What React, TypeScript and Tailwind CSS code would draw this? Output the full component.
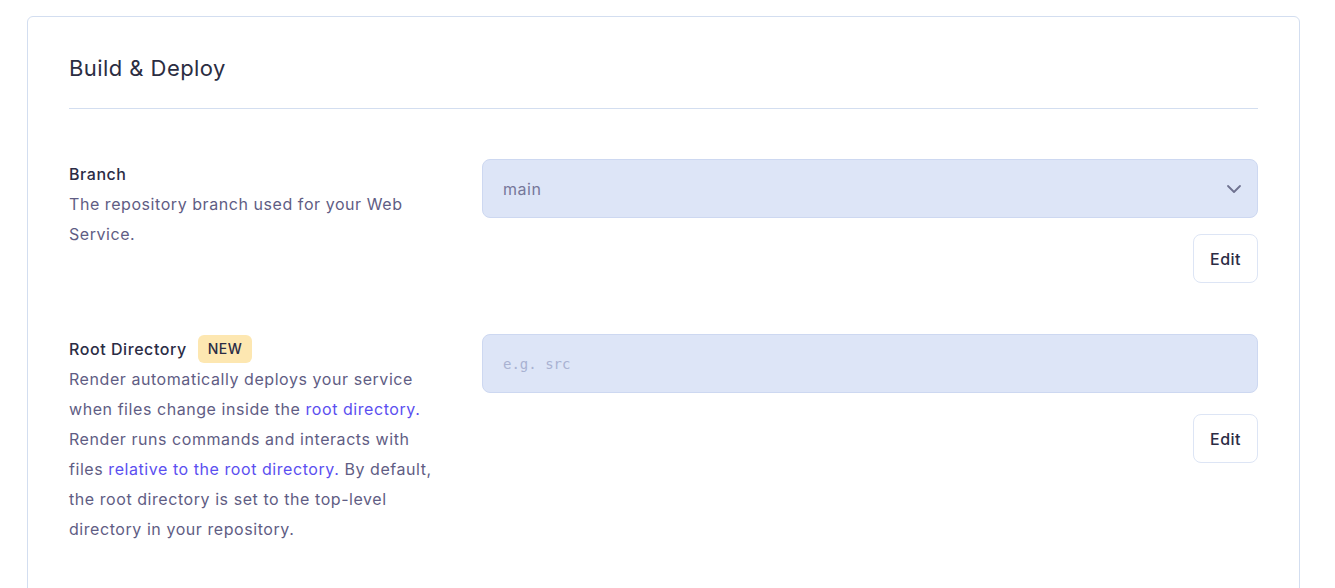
import React from 'react';

const font = { fontFamily: 'Inter, "Noto Sans", sans-serif' };

const EditButton = () => (
  <button className="h-[49px] w-[65px] rounded-lg border border-[#dde5f5] bg-white text-[16px] font-medium tracking-[0.03em] text-[#2b2c45]">
    Edit
  </button>
);

export default function App() {
  return (
    <div className="min-h-screen bg-white pl-[27px] pr-[35px] pt-4" style={font}>
      <div className="h-[600px] rounded-md border border-[#d3def0] bg-white px-[41px] pt-[37px]">
        <h2 className="text-[22px] leading-[28px] tracking-[0.02em] text-[#2b2d42]">Build &amp; Deploy</h2>
        <div className="mt-[26px] h-px bg-[#d3def0]" />

        <div className="mt-[50px] grid grid-cols-[372px_1fr] gap-x-[41px] tracking-[0.035em]">
          <div>
            <div className="text-[16px] font-medium leading-[30px] text-[#2b2c45]">Branch</div>
            <p className="text-[16px] leading-[30px] text-[#5f5d84]">
              The repository branch used for your Web Service.
            </p>
          </div>
          <div className="flex flex-col items-end gap-4">
            <div className="flex h-[59px] w-full items-center justify-between rounded-lg border border-[#cdd8f1] bg-[#dde5f7] pl-5 pr-[11px]">
              <span className="pt-px text-[16px] text-[#76779a]">main</span>
              <svg viewBox="0 0 24 24" fill="none" stroke="#6f7290" strokeWidth="1.8" strokeLinecap="round" strokeLinejoin="round" className="h-6 w-6">
                <path d="M6 9l6 6 6-6" />
              </svg>
            </div>
            <EditButton />
          </div>
        </div>

        <div className="mt-[51px] grid grid-cols-[372px_1fr] gap-x-[41px] tracking-[0.035em]">
          <div>
            <div className="flex items-center gap-[11px]">
              <span className="text-[16px] font-medium leading-[30px] text-[#2b2c45]">Root Directory</span>
              <span className="rounded-md bg-[#fde7b1] px-[10px] py-[3px] text-[14px] font-medium leading-[22px] text-[#2b2c45]">NEW</span>
            </div>
            <p className="text-[16px] leading-[30px] text-[#5f5d84]">
              Render automatically deploys your service when files change inside the{' '}
              <span className="text-[#5b4ff0]">root directory.</span> Render runs commands and interacts with files{' '}
              <span className="text-[#5b4ff0]">relative to the root directory.</span> By default, the root directory is set to
              the top-level directory in your repository.
            </p>
          </div>
          <div className="flex flex-col items-end gap-[21px]">
            <input
              placeholder="e.g. src"
              className="h-[59px] w-full rounded-lg border border-[#cdd8f1] bg-[#dde5f7] px-5 text-[14px] tracking-normal text-[#76779a] outline-none placeholder:text-[#a9b2d2]"
              style={{ fontFamily: '"DejaVu Sans Mono", monospace' }}
            />
            <EditButton />
          </div>
        </div>
      </div>
    </div>
  );
}
